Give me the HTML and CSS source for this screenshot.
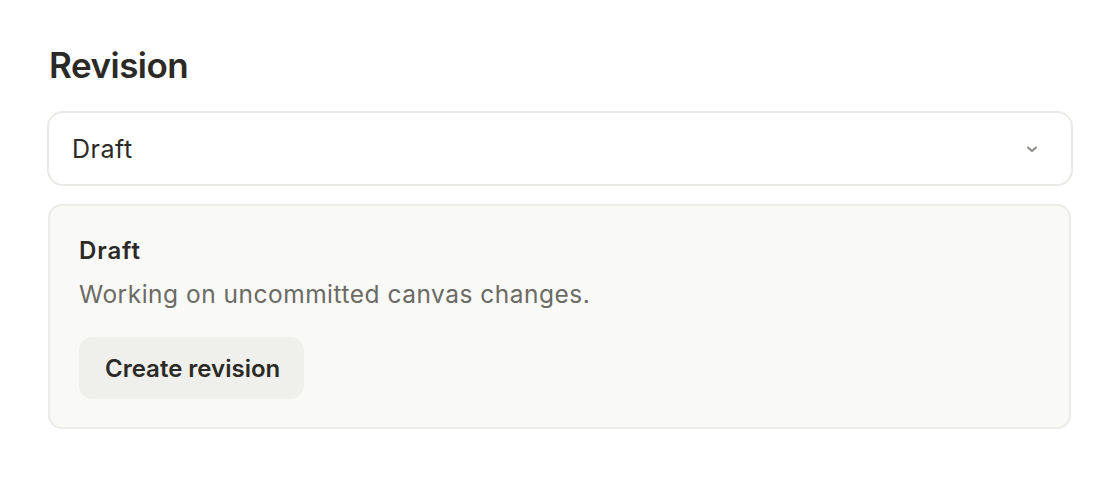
FILE: index.html
```html
<!DOCTYPE html>
<html>
<head>
<meta charset="utf-8">
<link rel="stylesheet" href="styles.css">
</head>
<body>
<main class="panel">
  <h1 class="title">Revision</h1>
  <div class="select">
    <span class="select-value">Draft</span>
    <svg class="chevron" width="14" height="10" viewBox="0 0 14 10" aria-hidden="true">
      <path d="M3 3.5 L7 7 L11 3.5" fill="none" stroke="#8a8983" stroke-width="2" stroke-linecap="round" stroke-linejoin="round"/>
    </svg>
  </div>
  <section class="card">
    <h2 class="card-title">Draft</h2>
    <p class="card-desc">Working on uncommitted canvas changes.</p>
    <button class="btn">Create revision</button>
  </section>
</main>
</body>
</html>
```

FILE: styles.css
```css
* { box-sizing: border-box; }
html, body { margin: 0; padding: 0; background: #ffffff; }
body {
  font-family: Inter, "Noto Sans", "Liberation Sans", sans-serif;
  color: #2b2a27;
}
.panel {
  padding: 44px 47px 0 47px;
  display: flex;
  flex-direction: column;
}
.title {
  margin: 0 0 0 2px;
  font-size: 35px;
  line-height: 42px;
  font-weight: 600;
  letter-spacing: -0.5px;
  color: #2b2a27;
}
.select {
  margin-top: 25px;
  height: 75px;
  border: 2px solid #e9e9e6;
  border-radius: 16px;
  display: flex;
  align-items: center;
  justify-content: space-between;
  padding: 0 32px 0 23px;
  background: #fff;
}
.select-value {
  font-size: 25px;
  letter-spacing: 0.5px;
  color: #2b2a27;
}
.chevron { display: block; }
.card {
  margin: 18px 2px 0 1px;
  height: 225px;
  background: #f9f9f7;
  border: 2px solid #ebebe8;
  border-radius: 14px;
  padding: 30px 29px;
  display: flex;
  flex-direction: column;
  align-items: flex-start;
}
.card-title {
  margin: 0;
  font-size: 24px;
  line-height: 30px;
  font-weight: 600;
  letter-spacing: 0.9px;
  color: #2b2a27;
}
.card-desc {
  margin: 13px 0 0 0;
  font-size: 24.5px;
  line-height: 30px;
  letter-spacing: 0.5px;
  color: #6b6a64;
}
.btn {
  margin-top: 28px;
  height: 62px;
  flex-shrink: 0;
  padding: 0 24px 0 26px;
  border: none;
  border-radius: 14px;
  background: #efefeb;
  font-family: inherit;
  font-size: 24px;
  font-weight: 600;
  color: #2b2a27;
}
```
